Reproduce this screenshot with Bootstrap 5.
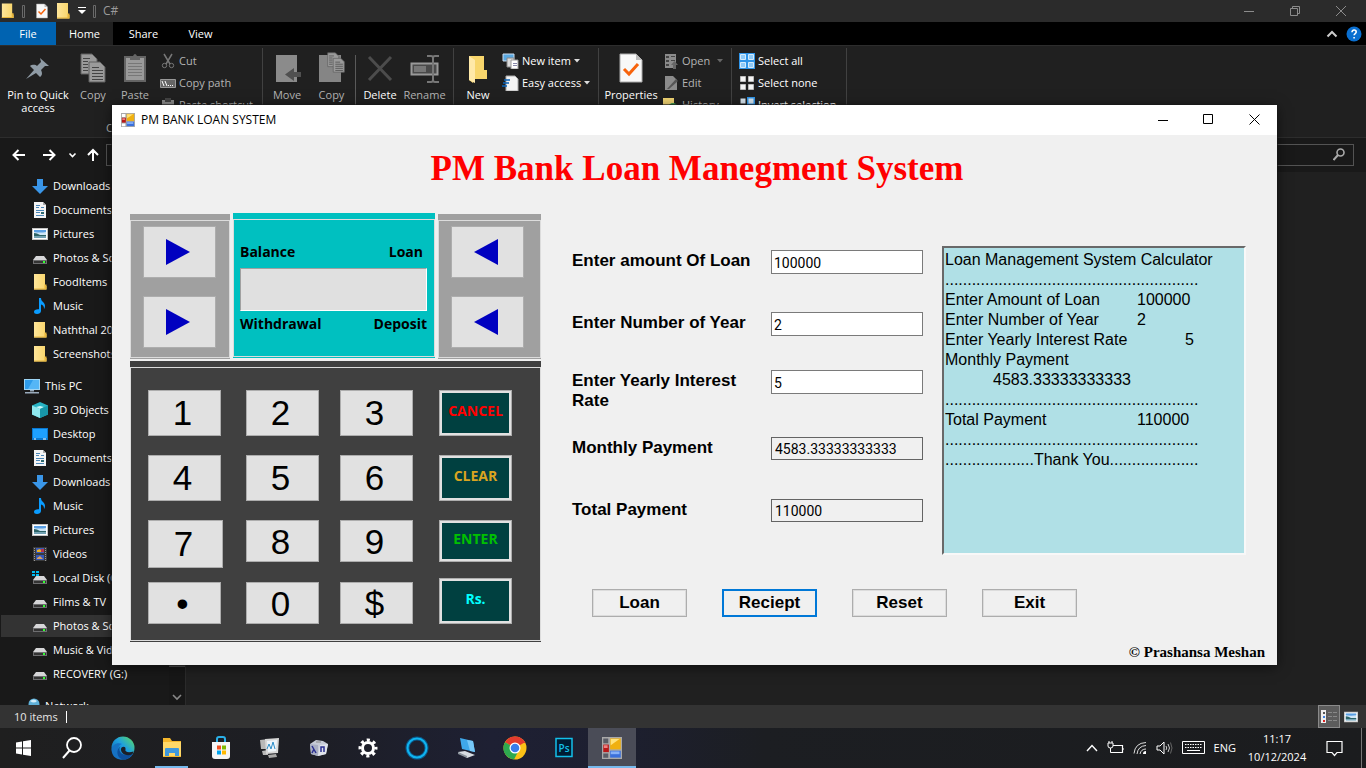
<!DOCTYPE html>
<html lang="en">
<head>
<meta charset="utf-8">
<meta name="viewport" content="width=device-width, initial-scale=1">
<title>PM BANK LOAN SYSTEM</title>
<link href="https://cdn.jsdelivr.net/npm/bootstrap@5.3.0/dist/css/bootstrap.min.css" rel="stylesheet">
<style>
  body { font-family: "Open Sans", "Noto Sans", sans-serif; font-size: 11px; line-height: 16px; color: #fff; background: #202020; }
  button { font-family: inherit; }
  svg { display: block; flex: none; }
  .desk { position: relative; height: 100vh; min-height: 720px; overflow: hidden; }
  .plain { background: none; border: 0; padding: 0; color: inherit; border-radius: 0; }
  .dim { color: #b4b4b4; }

  /* explorer */
  .xp-title { height: 23px; background: #2b2b2b; }
  .qat { gap: 7px; }
  .qat-name { color: #9a9a9a; font-size: 12px; }
  .xp-tabs { height: 23px; background: #000; }
  .xp-tabs a { color: #fff; text-decoration: none; line-height: 23px; width: 57px; text-align: center; }
  .xp-tabs a.file { background: #0063b1; width: 56px; }
  .xp-tabs a.on { background: #202020; margin-right: 2px; }
  .ribbon { height: 95px; background: #202020; border-top: 1px solid #2d2d2d; border-bottom: 1px solid #2d2d2d; }
  .rgroup { border-right: 1px solid #414141; margin-top: 2px; position: relative; }
  .rbig { display: flex; flex-direction: column; align-items: center; padding-top: 4px; line-height: 13px; }
  .rbig svg { margin-bottom: 4px; }
  .rcol { margin-top: 2px; }
  .rsmall { display: flex; align-items: center; height: 22px; gap: 3px; white-space: nowrap; }
  .rsep { width: 1px; background: #5a5a5a; margin: 7px 0 0 3px; }
  .rcap { position: absolute; left: 0; right: 0; bottom: 1px; text-align: center; color: #b4b4b4; }
  .w30 { width: 34px; } .w40 { width: 41px; } .w44 { width: 44px; } .w48 { width: 48px; } .w50 { width: 50px; } .w64 { width: 64px; } .w76 { width: 76px; }
  .addr { height: 34px; background: #191919; }
  .addrbox { height: 22px; border: 1px solid #535353; background: #191919; }
  .addr-path { width: 900px; }
  .addr-find { margin: 0 12px 0 8px; padding-right: 8px; }
  .xp-body { min-height: 0; }
  .side { width: 186px; background: #191919; overflow: hidden; }
  .side nav { min-width: 0; padding-top: 2px; }
  .side a { display: flex; align-items: center; gap: 5px; height: 24px; padding-left: 32px; color: #fff; text-decoration: none; white-space: nowrap; }
  .side a.root { padding-left: 24px; margin-top: 8px; }
  .side a.sel { background: #333; height: 22px; margin: 1px 0 1px 1px; padding-left: 31px; }
  .sbar { width: 17px; background: #171717; border-right: 1px solid #2b2b2b; }
  .thumb { height: 495px; background: #4d4d4d; }
  .status { height: 23px; background: #333; color: #e6e6e6; }
  .caret-line { width: 1px; height: 12px; background: #fff; }
  .viewbtn { width: 22px; height: 23px; background: #5c5c5c; border: 1px solid #8a8a8a; }

  /* taskbar */
  .task { height: 40px; background: linear-gradient(90deg, #1f1f1f 0, #1d1e24 22%, #1e2033 36%, #1d1f30 45%, #1c1e22 56%, #1b1c1e 100%); }
  .task .tb { width: 49px; height: 40px; display: flex; align-items: center; justify-content: center; border-bottom: 2px solid transparent; border-top: 2px solid transparent; }
  .task .tb.run { width: 33px; margin: 0 8px; border-bottom-color: #76b9ed; }
  .task .tb.cur { width: 48px; background: #4a4c57; border-bottom-color: #76b9ed; border-top-color: #4a4c57; color: #5b5d66; }
  .tray { gap: 9px; }
  .clock { width: 64px; line-height: 18px; }
  .peek { width: 1px; height: 40px; background: #777; margin: 0 4px 0 8px; }

  /* loan window */
  .loan { position: absolute; left: 112px; right: 89px; top: 105px; background: #f0f0f0; color: #000; box-shadow: 0 2px 12px rgba(0,0,0,.55), 0 0 0 1px rgba(30,30,30,.6); }
  .loan-title { height: 30px; background: #fff; font-size: 12px; padding: 0 17px 0 9px; }
  .loan-ico { color: #fff; margin-right: 6px; }
  .loan-btns { gap: 35px; }
  .loan h1 { font: bold 35px/44px "Liberation Serif", serif; color: #f00; text-align: center; margin: 0; padding: 12px 0 0 5px; }
  .loan-main { padding: 22px 31px 0 18px; }
  .atm { width: 411px; flex: none; }
  .gbox { padding: 6px 0 1px; }
  .gbox > div { border: 1px solid #dcdcdc; height: 100%; }
  .gray { background: #a0a0a0; height: 145px; margin-top: 1px; }
  .gray > div { padding: 5px 0 0 12px; display: flex; flex-direction: column; gap: 18px; }
  .teal { background: #00c0c0; width: 202px; height: 145px; }
  .teal > div { padding: 22px 7px 0 6px; }
  .dark { background: #404040; margin-top: 2px; }
  .key { background: #e1e1e1; border: 1px solid #adadad; border-radius: 0; color: #000; width: 73px; padding: 0 4px 0 0; display: flex; align-items: center; justify-content: center; }
  .key.arrow { height: 52px; }
  .screen-tx { font-size: 14px; line-height: 20px; font-weight: 700; }
  .screen-in { height: 43px; width: 100%; margin: 6px 0 3px; background: #e0e0e0; border: 1px solid #a0a0a0; border-right-color: #fff; border-bottom-color: #fff; }
  .pad { display: grid; grid-template-columns: 98px 94px 99px 73px; grid-template-rows: 65px 65px 62px 42px; align-items: start; padding: 22px 0 16px 17px; }
  .pad .key { font: 35px/42px "Liberation Sans", sans-serif; height: 42px; }
  .pad .key.tall { height: 46px; }
  .pad .key.big7 { width: 75px; height: 48px; }
  .pad .key.low { padding-top: 2px; }
  .pad .act { font: bold 14px/20px "Open Sans", sans-serif; background: #004040; box-shadow: inset 0 0 0 2px #e1e1e1; padding: 0 0 4px; }
  .c-red { color: #f00; } .c-gold { color: #daa520; } .c-green { color: #00c000; } .c-aqua { color: #0ff; }
  .calc { font-family: "Liberation Sans", sans-serif; padding: 33px 0 0 31px; }
  .fields { display: grid; grid-template-columns: 199px 152px; grid-template-rows: 62px 58px 67px 62px 24px; align-items: start; padding-top: 4px; }
  .fields label { font-weight: 700; font-size: 17px; line-height: 20px; width: 190px; padding-top: 1px; }
  .fields input { height: 24px; border: 1px solid #7a7a7a; border-radius: 0; background: #fff; font: 14px/20px Roboto, sans-serif; padding: 1px 2px 0; color: #000; }
  .fields input[readonly] { background: #f0f0f0; height: 23px; border-color: #646464; padding: 0 3px; }
  .paper { height: 309px; min-width: 0; resize: none; overflow: hidden; white-space: pre; tab-size: 48px; background: #b0e0e6; border-radius: 0; border: 2px solid; border-color: #696969 #f8f8f8 #f8f8f8 #696969; font: 16px/20px "Liberation Sans", sans-serif; color: #000; padding: 2px 0 0 1px; }
  .cmds { gap: 35px; padding: 34px 0 0 20px; }
  .cmd { width: 95px; height: 28px; background: #f0f0f0; border: 1px solid #adadad; box-shadow: inset 0 0 0 1px #dcdcdc; border-radius: 0; padding: 0; font: bold 17px/24px "Liberation Sans", sans-serif; color: #000; }
  .cmd.focus-on { border: 2px solid #0078d7; box-shadow: none; }
  .credit { font: bold 15px/20px "Liberation Serif", serif; padding: 0 12px 3px; }
</style>
</head>
<body>
<svg width="0" height="0" class="position-absolute" aria-hidden="true">
  <defs>
    <linearGradient id="gFold" x1="0" x2="1"><stop offset="0" stop-color="#ffe69a"/><stop offset="1" stop-color="#f8d468"/></linearGradient>
    <linearGradient id="gEdge" x1="0" y1="1" x2="1" y2="0"><stop offset="0" stop-color="#0c59a4"/><stop offset=".55" stop-color="#1d9fe0"/><stop offset="1" stop-color="#5fe05a"/></linearGradient>
  </defs>
  <symbol id="folder" viewBox="0 0 16 16"><path d="M2 0h11v12h1.500v3.500H2z" fill="url(#gFold)"/><path d="M2 14.500h12.500v1H2zM12.500 10.500h2V15h-2z" fill="#e8b63c"/></symbol>
  <symbol id="down" viewBox="0 0 16 16"><path d="M5 1h6v7h5l-8 8-8-8h5z" fill="#3a96e8"/></symbol>
  <symbol id="doc" viewBox="0 0 16 16"><path d="M2 0h9l3 3v13H2z" fill="#f4f4f4"/><path d="M11 0v3h3z" fill="#aaa"/><path d="M4 3.500h4M4 5.500h3M9 5.500h3M4 8.500h8M4 10.500h4M4 13.500h8" stroke="#4a86b8" fill="none"/><path d="M9 10h3v2H9z" fill="#2f6a70"/></symbol>
  <symbol id="pic" viewBox="0 0 16 16"><path d="M0 2h16v12H0z" fill="#c4c4c4"/><path d="M1 3h14v10H1z" fill="#fff"/><path d="M2 4h12v8H2z" fill="#cfe6f7"/><path d="M2 4h12v2q-6 1-12 0z" fill="#5a9fe4"/><path d="M2 7q3 0 6 2h6v1.500H2z" fill="#2d6468"/><path d="M2 10.500h12V12H2z" fill="#6fa0b4"/></symbol>
  <symbol id="drive" viewBox="0 0 16 16"><path d="M4 6h8l3 4H1z" fill="#d6d6d8"/><path d="M1 10h14v4H1z" fill="#6e6e70"/><path d="M2 11h12v2H2z" fill="#333"/><path d="M11 11h2v2h-2z" fill="#3f3"/></symbol>
  <symbol id="cdrive" viewBox="0 0 16 16"><path d="M4 6h8l3 4H1z" fill="#d6d6d8"/><path d="M1 10h14v4H1z" fill="#6e6e70"/><path d="M2 11h12v2H2z" fill="#333"/><path d="M11 11h2v2h-2z" fill="#3f3"/><path d="M0 1h3v2H0zM4 1h3v2H4zM0 4h3v2H0zM4 4h3v2H4z" fill="#00bcf2"/></symbol>
  <symbol id="music" viewBox="0 0 16 16"><path d="M7 0h2c0 4 4 4 4 8 0 1-.5 2.500-1 3 .2-2.500-1-4-3-4.500V13c0 2-2 3-4 3s-3-1-3-2.300C2 12 4 11 7 11.300z" fill="#0a9cff"/></symbol>
  <symbol id="pc" viewBox="0 0 16 16"><path d="M0 1h16v11H0z" fill="#9ed5f5"/><path d="M1 2h14v9H1z" fill="#2f9ceb"/><path d="M9 2h6v9H4z" fill="#55b6f6"/><path d="M6 12h4v1.500H6zM1 14h14v1.500H1z" fill="#9ab"/></symbol>
  <symbol id="cube" viewBox="0 0 16 16"><path d="M8 0l8 3.500v9L8 16l-8-3.500v-9z" fill="#27b3c4"/><path d="M0 3.500L8 7v9l-8-3.500z" fill="#8fe8ee"/><path d="M4 5l4-1 4 1-4 2z" fill="#c9f7f8"/><path d="M8 7l8-3.500v9L8 16z" fill="#1896a8"/></symbol>
  <symbol id="desk" viewBox="0 0 16 16"><path d="M0 2h16v12H0z" fill="#0a78d0"/><path d="M1 3h14v9H1z" fill="#1ea0ff"/><path d="M2 13h2M11 13h3" stroke="#fff"/></symbol>
  <symbol id="video" viewBox="0 0 16 16"><path d="M1 1h14v14H1z" fill="#3a3a3a"/><path d="M4 2h8v5H4z" fill="#3b5bb8"/><path d="M4 9h8v5H4z" fill="#3457b8"/><path d="M5 4l3-1 2 3H5z" fill="#e8b020"/><path d="M9 3h3v3H9z" fill="#b8324a"/><path d="M5 12l3-2 3 3H5z" fill="#d8a060"/><path d="M2.500 2v13M13.500 2v13" stroke="#999" stroke-dasharray="1 1"/></symbol>
  <symbol id="globe" viewBox="0 0 16 16"><circle cx="10" cy="6" r="5.500" fill="#5fb0d8"/><path d="M6 3q4-3 7 0-3 3-7 0z" fill="#d4eefa"/><path d="M0 7h8v6H0z" fill="#3a7fa8"/></symbol>
  <symbol id="forms" viewBox="0 0 16 16"><path d="M0 0h16v16H0z" fill="#a9a9a9"/><path d="M1 1h4v3.500H1zM1 12h4v3H1z" fill="currentColor"/><path d="M6.500 1H15v8H6.500z" fill="#f0b010"/><path d="M7 1.500h7L7 6z" fill="#ffe27a"/><path d="M1 5.500h4.500v5.500H1z" fill="#b81818"/><path d="M1.500 6h3v2h-3z" fill="#f08080"/><path d="M6.500 10H15v5H6.500z" fill="#3b70dc"/><path d="M7 10.500h7v2H7z" fill="#86b0f8"/></symbol>
  <symbol id="sheet" viewBox="0 0 24 30"><path d="M1 1h16l6 6v22H1z" fill="#f8f8f8" stroke="#aaa"/><path d="M17 1v6h6z" fill="#bbb"/><path d="M5 16l5 5 9-10" fill="none" stroke="#f7630c" stroke-width="3"/></symbol>
  <symbol id="copy" viewBox="0 0 26 30"><g fill="#9a9a9a" stroke="#5f5f5f"><path d="M1 1h11l5 5v15H1z"/><path d="M9 9h11l5 5v15H9z"/></g><path d="M3 5.500h7M3 8.500h5M3 11.500h5M3 14.500h5M3 17.500h5M12 14.500h7M12 17.500h11M12 20.500h11M12 23.500h11M12 26.500h11" stroke="#444" fill="none"/></symbol>
  <symbol id="grid4" viewBox="0 0 16 16"><path d="M1.500 1.500h5v5h-5zM9.500 1.500h5v5h-5zM1.500 9.500h5v5h-5zM9.500 9.500h5v5h-5z"/></symbol>
  <symbol id="bars" viewBox="0 0 3 13"><path d="M.5.500h2v12h-2z" fill="none" stroke="#6a6a6a"/></symbol>
</svg>

<div class="desk d-flex flex-column">
  <!-- explorer title bar -->
  <header class="xp-title d-flex align-items-center justify-content-between">
    <div class="qat d-flex align-items-center">
      <svg width="15" height="16"><use href="#folder"/></svg>
      <svg width="3" height="13"><use href="#bars"/></svg>
      <svg class="ms-1" width="12" height="16"><use href="#sheet"/></svg>
      <svg width="16" height="16"><use href="#folder"/></svg>
      <svg width="8" height="8"><path d="M0 .500h8" stroke="#fff"/><path d="M0 3h8L4 7z" fill="#fff"/></svg>
      <svg width="3" height="13"><use href="#bars"/></svg>
      <span class="qat-name">C#</span>
    </div>
    <div class="d-flex align-items-center pe-3" style="gap:36px">
      <button class="plain" aria-label="Minimize"><svg width="10" height="10"><path d="M0 5.500h10" stroke="#8c8c8c"/></svg></button>
      <button class="plain" aria-label="Restore"><svg width="10" height="10"><path d="M.5 2.500h7v7h-7zM2.500 2.500v-2h7v7h-2" fill="none" stroke="#8c8c8c"/></svg></button>
      <button class="plain me-1" aria-label="Close"><svg width="10" height="10"><path d="M0 0l10 10M10 0L0 10" stroke="#8c8c8c"/></svg></button>
    </div>
  </header>
  <nav class="xp-tabs d-flex">
    <a class="file" href="#">File</a><a class="on" href="#">Home</a><a href="#">Share</a><a href="#">View</a>
    <span class="ms-auto d-flex align-items-center gap-2 pe-1">
      <svg width="12" height="8"><path d="M1.500 6.500L6 2l4.500 4.500" fill="none" stroke="#ccc" stroke-width="2"/></svg>
      <svg width="16" height="16"><circle cx="8" cy="8" r="7.500" fill="#0a6fd0"/><path d="M6 6.200c0-3 4.200-2.600 4.200-.2 0 1.500-2.100 1.600-2.100 3.300M8.100 11v1.500" fill="none" stroke="#fff" stroke-width="1.600"/></svg>
    </span>
  </nav>

  <!-- ribbon -->
  <div class="ribbon d-flex">
    <div class="rgroup d-flex" style="width:263px">
      <button class="plain rbig w76"><svg width="30" height="32"><path d="M3 27l8-9-4-4c3-2 6-1 7 0l4-4-1-4 9 8-4 0-4 4c1 2 2 5-1 7l-4-4z" fill="#8f9ba5"/></svg>Pin to Quick<br>access</button>
      <button class="plain rbig w30 dim"><svg width="26" height="32" viewBox="0 0 26 30"><use href="#copy"/></svg>Copy</button>
      <button class="plain rbig w50 dim"><svg width="22" height="32"><path d="M1 5h20v24H1z" fill="#9a9a9a" stroke="#646464" stroke-width="2"/><path d="M6 4h3q2-4 4 0h3v4H6z" fill="#666"/><path d="M4 11.500h14M4 14.500h14M4 17.500h14M4 20.500h14M4 23.500h14" stroke="#777"/></svg>Paste</button>
      <div class="rcol dim">
        <div class="rsmall"><svg width="16" height="16"><path d="M4 1l6 10M12 1L6 11" stroke="#777" fill="none" stroke-width="1.500"/><circle cx="4.500" cy="12.500" r="2.200" fill="none" stroke="#777"/><circle cx="11.500" cy="12.500" r="2.200" fill="none" stroke="#777"/></svg>Cut</div>
        <div class="rsmall"><svg width="16" height="16"><path d="M.5 4.500h15v8H.5z" fill="#666" stroke="#999"/><path d="M2 6l2 5M5 6l2 5M8 10.500h1M10 10.500h1M12 10.500h1" stroke="#fff"/></svg>Copy path</div>
        <div class="rsmall"><svg width="16" height="16"><path d="M2 3h12v12H2z" fill="#8b8b8b"/><path d="M5 1h6v4H5zM5 8h6v6H5z" fill="#444"/></svg>Paste shortcut</div>
      </div>
      <span class="rcap">Clipboard</span>
    </div>
    <div class="rgroup d-flex dim" style="width:191px">
      <button class="plain rbig w48"><svg width="28" height="32"><path d="M3 3h21v27H3z" fill="#8b8b8b"/><path d="M28 20v5h-7v4l-9-6.500 9-6.500v4z" fill="#505050"/></svg>Move</button>
      <button class="plain rbig w40"><svg width="28" height="32"><path d="M1 3h22v27H1z" fill="#858585"/><use href="#copy" x="9" y="0" width="18" height="21"/></svg>Copy</button>
      <span class="rsep"></span>
      <button class="plain rbig w48 text-white"><svg width="26" height="32"><path d="M2 5l22 23M24 5L2 28" stroke="#4c4c4c" stroke-width="3"/></svg>Delete</button>
      <button class="plain rbig w40"><svg width="30" height="32"><path d="M1.500 11.500h26v11h-26z" fill="#4a4a4a" stroke="#999" stroke-width="2"/><path d="M4 14h12v6H4z" fill="#777"/><path d="M17 4h4q2 0 2 2v22q0 2-2 2h-4M29 4h-4q-2 0-2 2M29 30h-4q-2 0-2-2" fill="none" stroke="#777" stroke-width="2"/></svg>Rename</button>
    </div>
    <div class="rgroup d-flex" style="width:145px">
      <button class="plain rbig w48"><svg width="22" height="32"><path d="M2 4h15v14h3v9H7l-1 4-4-3z" fill="#f8d66c"/><path d="M2 4l6 4v23l-6-3z" fill="#ffe9a8"/></svg>New</button>
      <div class="rcol">
        <div class="rsmall"><svg width="17" height="16"><path d="M1 1h11v7H1z" fill="#5aa8e0" stroke="#cde"/><path d="M5 5h7v9H5z" fill="#ddd" stroke="#888"/><path d="M9 7h7v9H9z" fill="#fff" stroke="#999"/><path d="M11 10.500h4M11 12.500h4" stroke="#88a"/></svg>New item<svg width="6" height="4"><path d="M0 0h6L3 3.500z" fill="#ddd"/></svg></div>
        <div class="rsmall"><svg width="17" height="16"><path d="M4 1h9l3 3v12H4z" fill="#f4f4f4" stroke="#aaa"/><path d="M2 5h6M1 8h6M0 11h5" stroke="#0a63b8" stroke-width="1.500"/></svg>Easy access<svg width="6" height="4"><path d="M0 0h6L3 3.500z" fill="#ddd"/></svg></div>
      </div>
    </div>
    <div class="rgroup d-flex" style="width:133px">
      <button class="plain rbig w64"><svg width="24" height="32" viewBox="0 0 24 30"><use href="#sheet"/></svg>Properties</button>
      <div class="rcol dim">
        <div class="rsmall"><svg width="16" height="16"><path d="M2 1h11v14H2z" fill="#8b8b8b"/><path d="M3 3h3v2H3zM3 7h3v2H3zM3 11h3v2H3zM8 3h4v1H8zM8 7h4v1H8z" fill="#444"/><path d="M8 12l3.500-4 3.500 4h-2v4h-3v-4z" fill="#666"/></svg>Open<svg class="ms-1" width="6" height="4"><path d="M0 0h6L3 3.500z" fill="#666"/></svg></div>
        <div class="rsmall"><svg width="16" height="16"><path d="M2 1h8l4 4v10H2z" fill="#8b8b8b"/><path d="M4 14l9-10 2 2-9 8z" fill="#555"/></svg>Edit</div>
        <div class="rsmall"><svg width="16" height="16"><path d="M0 1h11v11H0z" fill="#f2d574"/><circle cx="10" cy="11" r="5" fill="#3a9a50"/></svg>History</div>
      </div>
    </div>
    <div class="rgroup" style="width:115px;padding:2px 0 0 7px">
      <div class="rsmall"><svg width="16" height="16"><path d="M0 0h16v16H0z" fill="#2f94e8"/><use href="#grid4" fill="#8fcaf8" stroke="#d4ebfc"/></svg>Select all</div>
      <div class="rsmall"><svg width="16" height="16"><use href="#grid4" fill="#f4f4f4" stroke="#bbb"/></svg>Select none</div>
      <div class="rsmall"><svg width="16" height="16"><path d="M8 0h8v16H8z" fill="#2f94e8"/><use href="#grid4" fill="#d8e6f0"/></svg>Invert selection</div>
    </div>
  </div>

  <!-- navigation bar -->
  <div class="addr d-flex align-items-center">
    <svg width="106" height="20"><g fill="none" stroke="#fff" stroke-width="2"><path d="M25 10H14M18.500 5l-5 5 5 5M43 10h11M49.500 5l5 5-5 5M93 16V5M88 10l5-5 5 5"/><path d="M69.500 8.500L72.500 11.500l3-3" stroke-width="1.600"/></g></svg>
    <div class="addrbox addr-path"></div>
    <div class="addrbox addr-find flex-grow-1 d-flex align-items-center justify-content-end"><svg width="12" height="13"><circle cx="7.500" cy="4.500" r="3.500" fill="none" stroke="#aaa" stroke-width="1.600"/><path d="M5 7L.5 12" stroke="#aaa" stroke-width="2"/></svg></div>
  </div>

  <!-- explorer body -->
  <div class="xp-body d-flex flex-grow-1">
    <div class="side d-flex">
      <nav class="flex-grow-1">
        <a href="#"><svg width="16" height="16"><use href="#down"/></svg>Downloads</a>
        <a href="#"><svg width="16" height="16"><use href="#doc"/></svg>Documents</a>
        <a href="#"><svg width="16" height="16"><use href="#pic"/></svg>Pictures</a>
        <a href="#"><svg width="16" height="16"><use href="#drive"/></svg>Photos &amp; Songs</a>
        <a href="#"><svg width="16" height="16"><use href="#folder"/></svg>FoodItems</a>
        <a href="#"><svg width="16" height="16"><use href="#music"/></svg>Music</a>
        <a href="#"><svg width="16" height="16"><use href="#folder"/></svg>Naththal 2024</a>
        <a href="#"><svg width="16" height="16"><use href="#folder"/></svg>Screenshots</a>
        <a href="#" class="root"><svg width="16" height="16"><use href="#pc"/></svg>This PC</a>
        <a href="#"><svg width="16" height="16"><use href="#cube"/></svg>3D Objects</a>
        <a href="#"><svg width="16" height="16"><use href="#desk"/></svg>Desktop</a>
        <a href="#"><svg width="16" height="16"><use href="#doc"/></svg>Documents</a>
        <a href="#"><svg width="16" height="16"><use href="#down"/></svg>Downloads</a>
        <a href="#"><svg width="16" height="16"><use href="#music"/></svg>Music</a>
        <a href="#"><svg width="16" height="16"><use href="#pic"/></svg>Pictures</a>
        <a href="#"><svg width="16" height="16"><use href="#video"/></svg>Videos</a>
        <a href="#"><svg width="16" height="16"><use href="#cdrive"/></svg>Local Disk (C:)</a>
        <a href="#"><svg width="16" height="16"><use href="#drive"/></svg>Films &amp; TV</a>
        <a href="#" class="sel"><svg width="16" height="16"><use href="#drive"/></svg>Photos &amp; Songs</a>
        <a href="#"><svg width="16" height="16"><use href="#drive"/></svg>Music &amp; Videos</a>
        <a href="#"><svg width="16" height="16"><use href="#drive"/></svg>RECOVERY (G:)</a>
        <a href="#" class="root"><svg width="16" height="16"><use href="#globe"/></svg>Network</a>
      </nav>
      <div class="sbar d-flex flex-column justify-content-between">
        <div class="thumb"></div>
        <svg class="mx-auto mb-1" width="10" height="8"><path d="M1 2l4 4 4-4" fill="none" stroke="#888" stroke-width="1.600"/></svg>
      </div>
    </div>
    <main class="flex-grow-1"></main>
  </div>
  <footer class="status d-flex align-items-center">
    <span style="margin-left:14px">10 items</span><span class="caret-line ms-2"></span>
    <span class="ms-auto viewbtn d-flex align-items-center justify-content-center"><svg width="16" height="13"><path d="M0 0h5v13H0z" fill="#eee"/><path d="M2 2h2v2H2z" fill="#555"/><path d="M2 6h2v2H2z" fill="#3a7fe0"/><path d="M2 10h2v2H2z" fill="#d22"/><path d="M7 2.500h4M12 2.500h4M7 6.500h4M12 6.500h4M7 10.500h4M12 10.500h4" stroke="#888"/></svg></span>
    <svg class="ms-1 me-2" width="14" height="14"><use href="#pic"/></svg>
  </footer>

  <!-- taskbar -->
  <div class="task d-flex align-items-center">
    <button class="plain tb" aria-label="Start"><svg class="me-1" width="16" height="18"><path d="M1 3.500l6-1V8.500H1zM8 2.300l8-1.200v7.400H8zM1 9.500h6v6l-6-1zM8 9.500h8v7.400l-8-1.200z" fill="#fff"/></svg></button>
    <button class="plain tb" aria-label="Search"><svg class="me-1" width="22" height="24"><circle cx="13" cy="9" r="7" fill="none" stroke="#fff" stroke-width="1.800"/><path d="M8.500 14.500L2 22" stroke="#fff" stroke-width="2"/></svg></button>
    <button class="plain tb" aria-label="Edge"><svg width="24" height="24"><circle cx="12" cy="12" r="11.500" fill="url(#gEdge)"/><path d="M.6 14C1 8 7 6 11 8c-6 1-5 12 2 15C6 25 .6 20 .6 14z" fill="#1672c4"/><path d="M9.500 10c-3 4 0 12 12.500 7.500-2 4-6 6.500-10 6C5 22 5 13 9.500 10z" fill="#0d4f9c"/><path d="M10 13c.5-3 5-3 4.500.2-1 2.300 2 4 8 2.300l-1 2.500c-5 3-12 0-11.500-5z" fill="#1c2028"/></svg></button>
    <button class="plain tb run" aria-label="File Explorer"><svg width="22" height="20"><path d="M2 0h7l2 3h9v16H2z" fill="#f5b72c"/><path d="M2 4h18v14H2z" fill="#ffd868"/><path d="M4 18v-7q0-1 1-1h12q1 0 1 1v7h-4v-3H8v3z" fill="#3f98dc"/></svg></button>
    <button class="plain tb" aria-label="Store"><svg width="20" height="24"><path d="M6 6V3q0-2 2-2h4q2 0 2 2v3" fill="none" stroke="#2ab0e8" stroke-width="2"/><path d="M1 6h18v14q0 3-3 3H4q-3 0-3-3z" fill="#f5f5f5"/><path d="M6 9.500h4v4H6z" fill="#f25022"/><path d="M11 9.500h4v4h-4z" fill="#7fba00"/><path d="M6 14.500h4v4H6z" fill="#00a4ef"/><path d="M11 14.500h4v4h-4z" fill="#ffb900"/></svg></button>
    <button class="plain tb" aria-label="Monitor"><svg width="22" height="22"><path d="M1 3l9-1v10H2zM3 14l6-1v5H4z" fill="#b8b8b8"/><path d="M6 2l14-1-1 15-12 1z" fill="#d8d8d8"/><path d="M8 4l10-1-1 11-8 1z" fill="#edf4fa"/><path d="M8 12l2-5 2 5 2-7 2 7" fill="none" stroke="#2a8cc8"/><path d="M9 18l8-1 1 3-8 1z" fill="#aaa"/></svg></button>
    <button class="plain tb" aria-label="Character Map"><svg width="22" height="20"><path d="M2 6l6-4 7 1 5 3-2 10-8 2-7-2z" fill="#c6cbd6"/><path d="M2 6l8 1v11l-7-2z" fill="#a9afc4"/><path d="M12 7l8-1-2 10-8 2z" fill="#dfe3ea"/><path d="M4 8l4 7M6 11l-2 4M13 14V9h3v5" stroke="#2a2f90" stroke-width="1.500" fill="none"/><path d="M8 4h5" stroke="#888"/></svg></button>
    <button class="plain tb" aria-label="Settings"><svg width="20" height="20"><circle cx="10" cy="10" r="5.500" fill="none" stroke="#fff" stroke-width="3"/><circle cx="10" cy="10" r="8" fill="none" stroke="#fff" stroke-width="3" stroke-dasharray="3.100 3.183" stroke-dashoffset="1.500"/></svg></button>
    <button class="plain tb" aria-label="Cortana"><svg width="24" height="24"><circle cx="12" cy="12" r="9.500" fill="none" stroke="#0a5a8c" stroke-width="4"/><circle cx="12" cy="12" r="9.500" fill="none" stroke="#10b4f0" stroke-width="2"/></svg></button>
    <button class="plain tb" aria-label="Remote"><svg width="22" height="22"><path d="M5 1l13 3 2 11-13-3z" fill="#3fa8ea"/><path d="M12 3l6 1 2 11-5-1z" fill="#76c8f8"/><path d="M3 15l7-1 10 4-8 3z" fill="#d8dde2"/><path d="M3 15l9 4v2l-9-4z" fill="#8b949c"/></svg></button>
    <button class="plain tb" aria-label="Chrome"><svg width="24" height="24"><circle cx="12" cy="12" r="11.500" fill="#fbc116"/><path d="M12 12L2 6.200A11.500 11.500 0 0 1 22 6.200z" fill="#e33b2e"/><path d="M12 12L2 6.200A11.500 11.500 0 0 0 11 23.500L16 14z" fill="#2da94f"/><path d="M12 6.500h10.200" stroke="#e33b2e" stroke-width="1"/><circle cx="12" cy="12" r="5.500" fill="#fff"/><circle cx="12" cy="12" r="4.300" fill="#3a7cec"/></svg></button>
    <button class="plain tb" aria-label="Photoshop"><svg width="20" height="22"><path d="M2 1.500h16v18H2z" fill="#001d33" stroke="#13c0ea" stroke-width="1.500"/><text x="10" y="14.500" font-size="10" font-weight="600" text-anchor="middle" fill="#13c0ea">Ps</text></svg></button>
    <button class="plain tb cur" aria-label="PM Bank Loan System"><svg width="20" height="22" viewBox="0 0 16 16" preserveAspectRatio="none"><use href="#forms"/></svg></button>
    <div class="tray ms-auto d-flex align-items-center">
      <svg width="12" height="8"><path d="M1 7l5-5.500L11 7" fill="none" stroke="#fff" stroke-width="1.400"/></svg>
      <svg width="17" height="14"><path d="M6 4.500h9.500v7H6" fill="none" stroke="#fff" stroke-width="1.200"/><path d="M16 7v2" stroke="#fff"/><path d="M1 2h5v3q0 2-2.500 2T1 5zM2 0v2M5 0v2M3.500 7v4.500H7" fill="none" stroke="#fff"/></svg>
      <svg width="14" height="14"><g fill="none" stroke="#ddd"><path d="M1 12.500Q2 2 13 1.500M4 13Q5 5 13 4.500M7 13q1-5 6-5"/></g><path d="M10 13q0-3 3-3v3z" fill="#fff"/></svg>
      <svg width="17" height="14"><path d="M1 5h3l4-4v12L4 9H1z" fill="none" stroke="#fff"/><path d="M10 5q1.500 2 0 4M12 3q3 4 0 8" fill="none" stroke="#ccc"/><path d="M14.500 1.500q3 5.500 0 11" fill="none" stroke="#666"/></svg>
      <svg width="23" height="14"><path d="M.5.500h22v12H.5z" fill="none" stroke="#fff"/><path d="M3 3.500h17M3 6.500h17" stroke="#fff" stroke-dasharray="1.500 1"/><path d="M5 9.500h13" stroke="#fff"/></svg>
      <span>ENG</span>
      <span class="clock text-center">11:17<br>10/12/2024</span>
      <svg class="ms-2" width="18" height="18"><path d="M1 2.500h15v11h-5l-2.500 3-2.500-3H1z" fill="none" stroke="#fff" stroke-width="1.200"/></svg>
      <span class="peek"></span>
    </div>
  </div>

  <!-- loan window on the desktop -->
  <section class="loan">
    <div class="loan-title d-flex align-items-center">
      <svg class="loan-ico" width="14" height="14"><use href="#forms"/></svg>
      <span>PM BANK LOAN SYSTEM</span>
      <div class="loan-btns ms-auto d-flex align-items-center">
        <button class="plain" aria-label="Minimize"><svg width="10" height="10"><path d="M0 5.500h10" stroke="#000"/></svg></button>
        <button class="plain" aria-label="Maximize"><svg width="11" height="12"><path d="M.5.500h9v9h-9z" fill="none" stroke="#000"/></svg></button>
        <button class="plain" aria-label="Close"><svg width="11" height="12"><path d="M.5.500l10 10M10.500.500l-10 10" stroke="#000"/></svg></button>
      </div>
    </div>
    <h1>PM Bank Loan Manegment System</h1>

    <div class="loan-main d-flex">
      <div class="atm">
        <div class="d-flex" style="gap:3px">
          <div class="gbox gray" style="width:100px"><div>
            <button class="key arrow" aria-label="Balance"><svg width="24" height="26"><path d="M0 0l24 13L0 26z" fill="#0000c0"/></svg></button>
            <button class="key arrow" aria-label="Withdrawal"><svg width="24" height="26"><path d="M0 0l24 13L0 26z" fill="#0000c0"/></svg></button>
          </div></div>
          <div class="gbox teal"><div>
            <div class="screen-tx d-flex justify-content-between"><span>Balance</span><span class="pe-1">Loan</span></div>
            <input class="screen-in d-block" type="text" aria-label="Display">
            <div class="screen-tx d-flex justify-content-between"><span>Withdrawal</span><span>Deposit</span></div>
          </div></div>
          <div class="gbox gray" style="width:103px"><div class="ps-2"><div class="contents ps-1 d-flex flex-column" style="gap:18px">
            <button class="key arrow" aria-label="Loan"><svg width="24" height="26"><path d="M24 0L0 13l24 13z" fill="#0000c0"/></svg></button>
            <button class="key arrow" aria-label="Deposit"><svg width="24" height="26"><path d="M24 0L0 13l24 13z" fill="#0000c0"/></svg></button>
          </div></div></div>
        </div>
        <div class="gbox dark"><div class="pad">
          <button class="key tall">1</button><button class="key tall">2</button><button class="key tall">3</button><button class="key tall act c-red">CANCEL</button>
          <button class="key tall">4</button><button class="key tall">5</button><button class="key tall">6</button><button class="key tall act c-gold">CLEAR</button>
          <button class="key big7">7</button><button class="key low">8</button><button class="key low">9</button><button class="key act c-green">ENTER</button>
          <button class="key low">•</button><button class="key low">0</button><button class="key low">$</button><button class="key tall act align-self-end c-aqua">Rs.</button>
        </div></div>
      </div>

      <div class="calc flex-grow-1">
        <div class="d-flex" style="gap:19px">
          <form class="fields flex-shrink-0">
            <label for="amt">Enter amount Of Loan</label><input id="amt" type="text" value="100000">
            <label for="yrs">Enter Number of Year</label><input id="yrs" type="text" value="2">
            <label for="rate">Enter Yearly Interest Rate</label><input id="rate" type="text" value="5">
            <label for="mon">Monthly Payment</label><input id="mon" type="text" value="4583.33333333333" readonly>
            <label for="tot">Total Payment</label><input id="tot" type="text" value="110000" readonly>
          </form>
          <textarea class="paper flex-grow-1" aria-label="Receipt">Loan Management System Calculator
.........................................................
Enter Amount of Loan&#9;100000
Enter Number of Year&#9;2
Enter Yearly Interest Rate&#9;&#9;5
Monthly Payment
&#9;4583.33333333333
.........................................................
Total Payment&#9;&#9;110000
.........................................................
....................Thank You....................</textarea>
        </div>
        <div class="cmds d-flex">
          <button class="cmd">Loan</button><button class="cmd focus-on">Reciept</button><button class="cmd">Reset</button><button class="cmd">Exit</button>
        </div>
      </div>
    </div>
    <div class="credit text-end">© Prashansa Meshan</div>
  </section>
</div>
<script src="https://cdn.jsdelivr.net/npm/bootstrap@5.3.0/dist/js/bootstrap.bundle.min.js"></script>
</body>
</html>
